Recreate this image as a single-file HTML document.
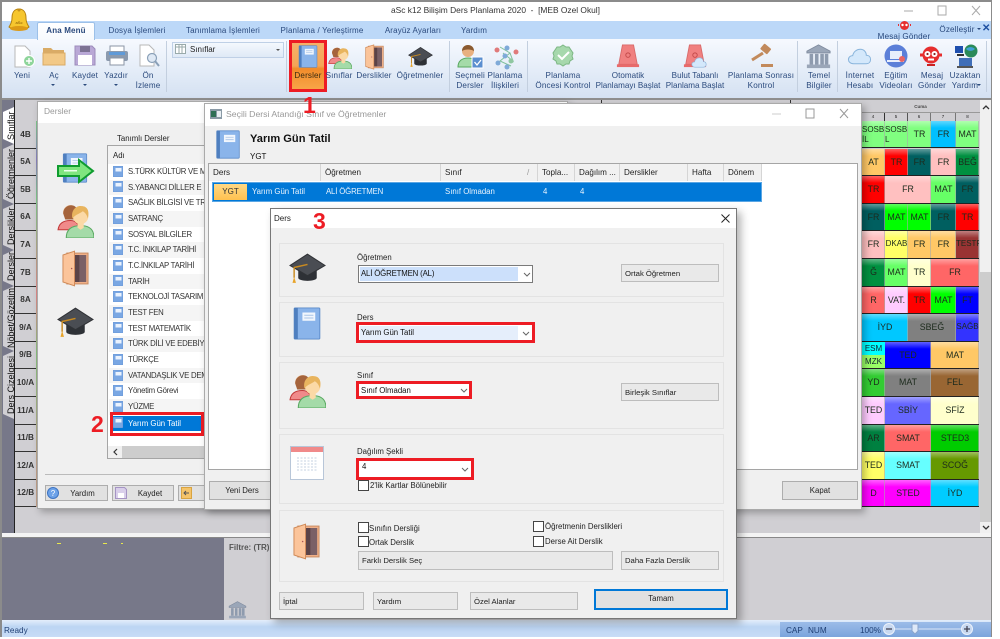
<!DOCTYPE html>
<html lang="tr"><head><meta charset="utf-8"><title>aSc k12</title>
<style>
html,body{margin:0;padding:0;background:#fff;width:1000px;height:639px;overflow:hidden}
#r{position:absolute;left:0;top:0;width:1000px;height:639px;overflow:hidden;font-family:"Liberation Sans",sans-serif;font-size:7.8px;color:#222;filter:blur(.35px)}
#r div,#r span,#r svg{position:absolute}
#r svg{overflow:visible}
.t{white-space:nowrap;line-height:11px;font-size:7.8px}
.rb{color:#2b4a7d;text-align:center;white-space:nowrap;line-height:10px;font-size:8.1px;letter-spacing:.15px}
.tab{color:#2b4a7d;top:25px;line-height:11px;white-space:nowrap;font-size:8px;letter-spacing:.15px;transform:translateX(-50%)}
.sep{top:41px;width:1px;height:51px;background:#c3cfdf}
.car{width:0;height:0;border-left:2px solid transparent;border-right:2px solid transparent;border-top:2px solid #2b4a7d}
.rl{left:15px;width:21px;text-align:center;background:#d0cfd3;border-bottom:1px solid #333;color:#333;font-size:8.2px;font-weight:bold;box-sizing:border-box;display:block}
.c{text-align:center;color:#1c2a1c;font-size:8.8px;line-height:26px;overflow:hidden;white-space:nowrap;height:26px;box-sizing:content-box;border-bottom:1px solid #222;background-image:linear-gradient(rgba(255,255,255,.38),rgba(255,255,255,0) 7px);box-shadow:inset -1px 0 0 rgba(170,170,170,.6)}
.vt{left:3px;width:11px;background:#d0cfd3;clip-path:polygon(0 5px,100% 0,100% 100%,0 calc(100% - 5px))}
.vtx{left:3px;width:11px;white-space:nowrap;font-size:9px;line-height:11px;color:#111}
.lr{left:109px;width:95px;height:16px;overflow:hidden;line-height:16px;white-space:nowrap;font-size:7.8px;letter-spacing:-.25px;color:#333}
.lr span{left:19px;top:0}
.btn{background:#e1e1e1;border:1px solid #adadad;box-sizing:border-box;text-align:center;color:#222;line-height:15px;font-size:7.8px}
.btl{background:#e9e9e9;border:1px solid #bdbdbd;box-sizing:border-box;padding-left:3px;color:#222;line-height:17px;font-size:7.7px;white-space:nowrap}
.gr{left:279px;width:445px;border:1px solid #e3e3e3;box-sizing:border-box}
.hc{top:164px;height:17px;line-height:17px;background:#f1f1f1;border-right:1px solid #d5d5d5;box-sizing:border-box;padding-left:4px;font-size:8.1px;color:#222;white-space:nowrap;overflow:hidden}
.red{border:3px solid #ed1c24;box-sizing:border-box}
.num{color:#ed1c24;font-weight:bold;font-size:23px;line-height:23px;font-family:"Liberation Sans",sans-serif}
.cb{width:9px;height:9px;border:1px solid #444;background:#fff;box-sizing:content-box}
.sh{box-shadow:3px 3px 7px rgba(0,0,0,.28)}
</style></head><body>
<div id="r">
<svg width="0" height="0" style="left:0;top:0"><defs>
<symbol id="book" viewBox="0 0 30 36"><rect x="1" y="1" width="28" height="34" rx="1" fill="#8ab4ea" stroke="#5c8bc9"/><rect x="1" y="1" width="4" height="34" fill="#4f7fbf"/><rect x="10" y="6" width="14" height="9" fill="#f1f6fd"/><path d="M12 9h10M12 12h10" stroke="#a9c4e6"/></symbol>
<symbol id="ppl" viewBox="0 0 36 36"><circle cx="13" cy="11" r="7" fill="#f4c8a0"/><path d="M6 12c0-9 13-11 14-2l-3 8H8z" fill="#a5643c"/><path d="M1 28c1-7 6-9 12-9 5 0 8 3 9 9z" fill="#f08a8a" stroke="#c23a3a"/><circle cx="23" cy="15" r="7.5" fill="#fbd9a6"/><path d="M15 17c-2-10 6-13 9-12 5 0 8 4 6 12-1-4-3-6-5-7-2 2-7 3-10 7z" fill="#e8b45e"/><path d="M9 36c0-9 6-12 14-12s13 3 13 12z" fill="#a4dba8" stroke="#58a860"/><path d="M20 21h6v5l-3 2-3-2z" fill="#fbd9a6"/></symbol>
<symbol id="door" viewBox="0 0 28 38"><rect x="5" y="3" width="22" height="32" fill="#f0b088" stroke="#c88a60"/><rect x="12" y="5" width="13" height="28" fill="#5b4347"/><rect x="18" y="5" width="7" height="28" fill="#7a6066"/><path d="M1 5 13 1v36L1 33z" fill="#fbc49a" stroke="#d08a58"/><circle cx="10" cy="19" r=".8" fill="#a55"/></symbol>
<symbol id="cap" viewBox="0 0 36 36"><path d="M9 18v10c0 4 18 4 18 0V18z" fill="#2e3136"/><path d="M18 5 35 16 18 26 1 16z" fill="#4a4d53" stroke="#303236"/><path d="M18 15 5 18v10" fill="none" stroke="#c98a20" stroke-width="1.4"/><path d="M5 27l-1.6 6h3.4z" fill="#e8a42a"/></symbol>
<symbol id="bank" viewBox="0 0 28 28"><path d="M14 1 27 8v2H1V8z" fill="#9aa6b8" stroke="#7f8b9e"/><path d="M4 11h4v12H4zm6 0h4v12h-4zm6 0h4v12h-4zm5 0h4v12h-4z" fill="#8e9bae"/><rect x="1" y="23" width="26" height="4" fill="#9aa6b8"/></symbol>
<symbol id="siren" viewBox="0 0 26 26"><path d="M7 1h12l4 21H3z" fill="#f08080" stroke="#d86a6a"/><rect x="1" y="22" width="24" height="3" fill="#e86a6a"/><circle cx="13" cy="12" r="2.4" fill="none" stroke="#c34a4a"/></symbol>
<symbol id="cloud" viewBox="0 0 28 20"><path d="M7 18.500C3 18.500 1 16 1 13.500s2-4.500 5-4.500C7 4 11 1.500 15 1.500c4 0 7 3 7 7 3 0 5 2 5 5s-2 5-5 5z" fill="#d4e8fb" stroke="#8ab5dc" stroke-width="1.200"/></symbol>
<symbol id="mini" viewBox="0 0 10 11"><rect width="10" height="11" rx="1" fill="#7aa7e3" stroke="#5a8bcf" stroke-width=".5"/><rect x="2.500" y="2" width="6" height="3.500" fill="#eaf2fd"/></symbol>
</defs></svg>

<!-- frame -->
<div style="left:0;top:0;width:992px;height:637px;background:#8b8b8b"></div>
<div style="left:2px;top:2px;width:989px;height:19px;background:#fff"></div>
<div class="t" style="left:391px;top:5px;font-size:8.4px;color:#333">aSc k12 Bilişim Ders Planlama 2020 &nbsp;- &nbsp;[MEB Ozel Okul]</div>
<svg style="left:904px;top:5px" width="80" height="12"><path d="M0 6h9" stroke="#aaa"/><rect x="34" y="1" width="8" height="9" fill="none" stroke="#aaa"/><path d="M68 1l8 9m0-9-8 9" stroke="#aaa" fill="none"/></svg>

<!-- menu tabs -->
<div style="left:2px;top:21px;width:989px;height:18px;background:#bcd8f8"></div>
<!-- ribbon -->
<div style="left:2px;top:39px;width:989px;height:59px;background:linear-gradient(#f6f9fe,#d4e1f2)"></div>
<div style="left:37px;top:22px;width:58px;height:18px;background:linear-gradient(#fff,#f6f9fd);border:1px solid #9cc0e8;border-bottom:0;box-sizing:border-box;border-radius:2px 2px 0 0"></div>
<div class="tab" style="left:66px;font-weight:bold">Ana Menü</div>
<div class="tab" style="left:137px">Dosya İşlemleri</div>
<div class="tab" style="left:223px">Tanımlama İşlemleri</div>
<div class="tab" style="left:322px">Planlama / Yerleştirme</div>
<div class="tab" style="left:413px">Arayüz Ayarları</div>
<div class="tab" style="left:474px">Yardım</div>
<svg style="left:898px;top:20px" width="13" height="11" viewBox="0 0 13 11"><circle cx="6.500" cy="5.500" r="4.500" fill="#e62e2e"/><circle cx="4.500" cy="5" r="1.200" fill="#fff"/><circle cx="8.500" cy="5" r="1.200" fill="#fff"/><path d="M1 5h-1M12 5h1" stroke="#e62e2e" stroke-width="2"/></svg>
<div class="rb" style="left:868px;top:32px;width:72px">Mesaj Gönder</div>
<div class="rb" style="left:935px;top:25px;width:44px">Özelleştir</div>
<div class="car" style="left:977px;top:28px"></div>
<div class="t" style="left:982px;top:23px;color:#1d4fa0;font-weight:bold;font-size:10px">✕</div>
<svg style="left:8px;top:8px" width="22" height="24" viewBox="0 0 22 24"><path d="M11 1c-5 0-7 4-7 9 0 5-2 7-3 9 3 3 17 3 20 0-1-2-3-4-3-9 0-5-2-9-7-9z" fill="#f6c62e" stroke="#b5810e"/><ellipse cx="11" cy="20.500" rx="9" ry="2.500" fill="#dc9a16"/><circle cx="11" cy="2" r="1.500" fill="#c4901c"/><text x="11" y="16" font-size="4" text-anchor="middle" font-family="Liberation Sans" fill="#7a4f00">aSc</text></svg>

<div class="sep" style="left:166px"></div><div class="sep" style="left:286px"></div><div class="sep" style="left:449px"></div><div class="sep" style="left:527px"></div><div class="sep" style="left:797px"></div><div class="sep" style="left:837px"></div><div class="sep" style="left:986px"></div>
<!-- Yeni -->
<svg style="left:14px;top:45px" width="22" height="24" viewBox="0 0 22 24"><path d="M1 1h10l5 5v16H1z" fill="#fff" stroke="#b8b8b8"/><circle cx="15" cy="16" r="5.500" fill="#8ed59a" stroke="#fff"/><path d="M15 13v6M12 16h6" stroke="#fff" stroke-width="1.400"/></svg>
<div class="rb" style="left:2px;top:71px;width:40px">Yeni</div>
<!-- Ac -->
<svg style="left:42px;top:45px" width="24" height="21" viewBox="0 0 24 21"><path d="M1 3h8l2 2h11v15H1z" fill="#d9ab66"/><path d="M1 8h22v12H1z" fill="#f2c987" stroke="#d9ab66"/></svg>
<div class="rb" style="left:34px;top:71px;width:40px">Aç</div><div class="car" style="left:51px;top:84px"></div>
<!-- Kaydet -->
<svg style="left:74px;top:45px" width="22" height="21" viewBox="0 0 22 21"><path d="M1 1h17l3 3v16H1z" fill="#b9a8d6" stroke="#9d8cbb"/><rect x="6" y="1" width="10" height="6" fill="#7c7294"/><rect x="4" y="10" width="14" height="10" fill="#fff"/></svg>
<div class="rb" style="left:65px;top:71px;width:40px">Kaydet</div><div class="car" style="left:83px;top:84px"></div>
<!-- Yazdir -->
<svg style="left:105px;top:45px" width="24" height="21" viewBox="0 0 24 21"><rect x="5" y="1" width="14" height="6" fill="#fff" stroke="#8b95a5"/><rect x="1" y="6" width="22" height="10" rx="2" fill="#8b9aae"/><rect x="4" y="7" width="16" height="3" fill="#5f9ad8"/><rect x="5" y="13" width="14" height="7" fill="#fff" stroke="#8b95a5"/></svg>
<div class="rb" style="left:96px;top:71px;width:40px">Yazdır</div><div class="car" style="left:114px;top:84px"></div>
<!-- On -->
<svg style="left:139px;top:44px" width="21" height="24" viewBox="0 0 21 24"><path d="M1 1h9l5 5v16H1z" fill="#fff" stroke="#b8b8b8"/><circle cx="13" cy="14" r="4.500" fill="#dfe9f5" stroke="#8aa0b8" stroke-width="1.200"/><path d="M16 17l4 5" stroke="#8aa0b8" stroke-width="2"/></svg>
<div class="rb" style="left:128px;top:71px;width:40px">Ön<br>İzleme</div>
<!-- combo -->
<div style="left:172px;top:42px;width:112px;height:16px;background:linear-gradient(#f4f8fd,#dfe9f6);border:1px solid #bfd0e6;box-sizing:border-box"></div>
<svg style="left:175px;top:44px" width="11" height="10"><rect x=".5" y=".5" width="10" height="9" fill="#fff" stroke="#9aa"/><path d="M.5 3h10M4 1v8M7 1v8" stroke="#9aa"/></svg>
<div class="t" style="left:190px;top:44px;color:#222;font-size:8px">Sınıflar</div>
<div class="car" style="left:276px;top:49px;border-top-color:#555"></div>
<!-- Dersler highlighted -->
<div style="left:289px;top:40px;width:38px;height:52px;background:linear-gradient(#f6b26a 0,#f5a556 50%,#f28c2a 55%,#f9a94c 100%)"></div>
<svg style="left:298px;top:45px" width="20" height="23"><use href="#book" width="20" height="23"/></svg>
<div class="rb" style="left:288px;top:71px;width:40px;color:#3b2b10">Dersler</div>
<div class="red" style="left:289px;top:40px;width:38px;height:52px"></div>
<svg style="left:328px;top:45px" width="24" height="24"><use href="#ppl" width="24" height="24"/></svg>
<div class="rb" style="left:319px;top:71px;width:40px">Sınıflar</div>
<svg style="left:365px;top:44px" width="19" height="26"><use href="#door" width="19" height="26"/></svg>
<div class="rb" style="left:354px;top:71px;width:40px">Derslikler</div>
<svg style="left:408px;top:44px" width="25" height="25"><use href="#cap" width="25" height="25"/></svg>
<div class="rb" style="left:395px;top:71px;width:50px">Öğretmenler</div>
<svg style="left:458px;top:43px" width="26" height="27" viewBox="0 0 26 27"><circle cx="10" cy="8" r="6" fill="#e8b080"/><path d="M4 8c0-8 12-8 12 0-3-2-9-2-12 0z" fill="#8a5a30"/><path d="M0 24c0-6 4-9 10-9s9 3 9 9z" fill="#a4dba8" stroke="#58a860"/><rect x="14" y="14" width="11" height="11" fill="#5b8fd0" stroke="#fff"/><path d="M16.500 19l2.500 3 4-5" stroke="#fff" fill="none" stroke-width="1.300"/></svg>
<div class="rb" style="left:450px;top:71px;width:40px">Seçmeli<br>Dersler</div>
<svg style="left:493px;top:44px" width="26" height="26" viewBox="0 0 26 26"><g stroke="#7fc09a" fill="none"><path d="M7 3l10 6-10 8 11 5M17 9l3 8-10-8"/></g><circle cx="4" cy="6" r="2.500" fill="#e07a7a"/><circle cx="14" cy="4" r="2.500" fill="#7faad8"/><circle cx="23" cy="8" r="2.500" fill="#e07a7a"/><circle cx="12" cy="12" r="2.500" fill="#7faad8"/><circle cx="5" cy="19" r="2.500" fill="#7faad8"/><circle cx="18" cy="17" r="2.500" fill="#8fc7a0"/><circle cx="14" cy="23" r="2.500" fill="#7faad8"/></svg>
<div class="rb" style="left:485px;top:71px;width:40px">Planlama<br>İlişkileri</div>
<svg style="left:552px;top:44px" width="22" height="23" viewBox="0 0 22 23"><path d="M11 1l3 2 3 0 2 3 2 3-1 3 1 3-3 2-1 3-3 0-3 2-3-2-3 0-1-3-3-2 1-3-1-3 2-3 2-3 3 0z" fill="#a6d8ac" stroke="#7cb784"/><path d="M6 11l4 4 7-7" stroke="#fff" stroke-width="2" fill="none"/></svg>
<div class="rb" style="left:533px;top:71px;width:60px">Planlama<br>Öncesi Kontrol</div>
<svg style="left:616px;top:44px" width="24" height="24"><use href="#siren" width="24" height="24"/></svg>
<div class="rb" style="left:593px;top:71px;width:70px;letter-spacing:0">Otomatik<br>Planlamayı Başlat</div>
<svg style="left:683px;top:44px" width="24" height="24"><use href="#siren" width="24" height="24"/></svg>
<svg style="left:691px;top:57px" width="16" height="11"><use href="#cloud" width="16" height="11"/></svg>
<div class="rb" style="left:660px;top:71px;width:70px;letter-spacing:0">Bulut Tabanlı<br>Planlama Başlat</div>
<svg style="left:750px;top:44px" width="24" height="24" viewBox="0 0 24 24"><rect x="11" y="1" width="9" height="7" rx="1" transform="rotate(40 15 5)" fill="#c28a5c"/><path d="M13 9 2 16" stroke="#c28a5c" stroke-width="3"/><rect x="11" y="20" width="12" height="3" fill="#c28a5c"/></svg>
<div class="rb" style="left:726px;top:71px;width:70px">Planlama Sonrası<br>Kontrol</div>
<svg style="left:806px;top:44px" width="25" height="25"><use href="#bank" width="25" height="25"/></svg>
<div class="rb" style="left:799px;top:71px;width:40px">Temel<br>Bilgiler</div>
<svg style="left:847px;top:48px" width="25" height="17"><use href="#cloud" width="25" height="17"/></svg>
<div class="rb" style="left:840px;top:71px;width:40px">İnternet<br>Hesabı</div>
<svg style="left:884px;top:44px" width="24" height="24" viewBox="0 0 24 24"><circle cx="12" cy="12" r="11.500" fill="#5b7fd8"/><rect x="6" y="7" width="12" height="8" fill="#e8eefb"/><rect x="3" y="16" width="17" height="2" fill="#e8eefb"/><circle cx="18" cy="15" r="3" fill="#e86464"/></svg>
<div class="rb" style="left:876px;top:71px;width:40px">Eğitim<br>Videoları</div>
<svg style="left:919px;top:45px" width="24" height="22" viewBox="0 0 24 22"><circle cx="12" cy="10" r="8.500" fill="#e62e2e"/><circle cx="8.500" cy="9" r="3" fill="#fff"/><circle cx="15.500" cy="9" r="3" fill="#fff"/><circle cx="8.500" cy="9" r="1.100" fill="#822"/><circle cx="15.500" cy="9" r="1.100" fill="#822"/><path d="M9 14.500h6" stroke="#fff" stroke-width="2"/><path d="M1 10h3M20 10h3" stroke="#e62e2e" stroke-width="3"/><path d="M8 20h8" stroke="#c22" stroke-width="2"/></svg>
<div class="rb" style="left:912px;top:71px;width:40px">Mesaj<br>Gönder</div>
<svg style="left:954px;top:44px" width="24" height="24" viewBox="0 0 24 24"><rect x="1" y="2" width="8" height="7" fill="#1e4fae"/><rect x="3" y="10" width="7" height="2" fill="#333"/><circle cx="17" cy="7" r="6.500" fill="#2a8a58"/><path d="M12 5c3-3 7-2 9 0-2 2-6 3-9 0z" fill="#3fa0d8"/><rect x="5" y="14" width="13" height="8" fill="#3f6eb8"/><path d="M3 23h16" stroke="#555" stroke-width="2"/></svg>
<div class="rb" style="left:945px;top:71px;width:40px">Uzaktan<br>Yardım</div><div class="car" style="left:977px;top:84px"></div>

<!-- workspace -->
<div style="left:2px;top:98px;width:989px;height:2px;background:#8f8f8f"></div>
<div style="left:2px;top:100px;width:989px;height:433px;background:#d0cfd3"></div>
<div style="left:2px;top:100px;width:12px;height:433px;background:#777889"></div>
<div style="left:14px;top:100px;width:1px;height:433px;background:#222"></div>
<div style="left:601px;top:100px;width:1px;height:4px;background:#333"></div>
<div style="left:790px;top:100px;width:1px;height:4px;background:#333"></div>

<!-- vertical tabs -->
<div class="vt" style="top:107px;height:37px;background:#fff"></div>
<div class="vt" style="top:144px;height:60px"></div>
<div class="vt" style="top:204px;height:46px"></div>
<div class="vt" style="top:250px;height:36px"></div>
<div class="vt" style="top:286px;height:65px"></div>
<div class="vt" style="top:351px;height:68px"></div>
<div class="vtx" style="top:140px;transform-origin:0 0;transform:rotate(-90deg) translateY(3px)">Sınıflar</div>
<div class="vtx" style="top:199px;transform-origin:0 0;transform:rotate(-90deg) translateY(3px)">Öğretmenler</div>
<div class="vtx" style="top:245px;transform-origin:0 0;transform:rotate(-90deg) translateY(3px)">Derslikler</div>
<div class="vtx" style="top:281px;transform-origin:0 0;transform:rotate(-90deg) translateY(3px)">Dersler</div>
<div class="vtx" style="top:348px;transform-origin:0 0;transform:rotate(-90deg) translateY(3px)">Nöbet/Gözetim</div>
<div class="vtx" style="top:414px;transform-origin:0 0;transform:rotate(-90deg) translateY(3px)">Ders Çizelgesi</div>

<!-- row labels -->
<div style="left:15px;top:100px;width:22px;height:21px;background:#d0cfd3;border-bottom:1px solid #333"></div>
<div class="rl" style="top:121px;height:28px;line-height:27px">4B</div>
<div class="rl" style="top:149px;height:27px;line-height:26px">5A</div>
<div class="rl" style="top:176px;height:28px;line-height:27px">5B</div>
<div class="rl" style="top:204px;height:27px;line-height:26px">6A</div>
<div class="rl" style="top:231px;height:28px;line-height:27px">7A</div>
<div class="rl" style="top:259px;height:28px;line-height:27px">7B</div>
<div class="rl" style="top:287px;height:27px;line-height:26px">8A</div>
<div class="rl" style="top:314px;height:28px;line-height:27px">9/A</div>
<div class="rl" style="top:342px;height:27px;line-height:26px">9/B</div>
<div class="rl" style="top:369px;height:28px;line-height:27px">10/A</div>
<div class="rl" style="top:397px;height:28px;line-height:27px">11/A</div>
<div class="rl" style="top:425px;height:27px;line-height:26px">11/B</div>
<div class="rl" style="top:452px;height:28px;line-height:27px">12/A</div>
<div class="rl" style="top:480px;height:27px;line-height:26px">12/B</div>
<div style="left:36px;top:121px;width:1px;height:386px;background:linear-gradient(#7fc98a,#8a7fc0 10%,#7fc98a 20%,#e08a8a 45%,#8ac07f 60%,#c0a08a 90%)"></div>

<!-- grid header -->
<div style="left:862px;top:100px;width:118px;height:21px;background:#cfced2"></div>
<div class="t" style="left:862px;top:102px;width:117px;text-align:center;font-size:4.500px;line-height:9px;font-weight:bold;color:#444">Cuma</div>
<div style="left:862px;top:112px;width:118px;height:1px;background:#999"></div>
<div class="t" style="left:862px;top:113px;width:23px;height:8px;text-align:center;font-size:4.500px;line-height:8px;border-right:1px solid #333;box-sizing:border-box">4</div>
<div class="t" style="left:885px;top:113px;width:23px;height:8px;text-align:center;font-size:4.500px;line-height:8px;border-right:1px solid #555;box-sizing:border-box">5</div>
<div class="t" style="left:908px;top:113px;width:23px;height:8px;text-align:center;font-size:4.500px;line-height:8px;border-right:1px solid #777;box-sizing:border-box">6</div>
<div class="t" style="left:931px;top:113px;width:25px;height:8px;text-align:center;font-size:4.500px;line-height:8px;border-right:1px solid #777;box-sizing:border-box">7</div>
<div class="t" style="left:956px;top:113px;width:23px;height:8px;text-align:center;font-size:4.500px;line-height:8px">8</div>

<!-- grid cells -->
<div class="c" style="left:862px;top:121px;width:23px;height:22px;padding-top:4px;background-color:#80ff80;line-height:10px;text-align:left;font-size:8px">SOSB<br>İL</div>
<div class="c" style="left:885px;top:121px;width:23px;height:22px;padding-top:4px;background-color:#80ff80;line-height:10px;text-align:left;font-size:8px">SOSBİ<br>L</div>
<div class="c" style="left:908px;top:121px;width:23px;background-color:#80ff80">TR</div>
<div class="c" style="left:931px;top:121px;width:25px;background-color:#00c0ff">FR</div>
<div class="c" style="left:956px;top:121px;width:23px;background-color:#80ff80">MAT</div>

<div class="c" style="left:862px;top:149px;width:23px;background-color:#ffc866">AT</div>
<div class="c" style="left:885px;top:149px;width:23px;background-color:#ff0000">TR</div>
<div class="c" style="left:908px;top:149px;width:23px;background-color:#005f60">FR</div>
<div class="c" style="left:931px;top:149px;width:25px;background-color:#ffc0c0">FR</div>
<div class="c" style="left:956px;top:149px;width:23px;background-color:#009040">BEĞ</div>

<div class="c" style="left:862px;top:176px;width:23px;height:27px;background-color:#ff0000">TR</div>
<div class="c" style="left:885px;top:176px;width:46px;height:27px;background-color:#ffc0c0">FR</div>
<div class="c" style="left:931px;top:176px;width:25px;height:27px;background-color:#66ff66">MAT</div>
<div class="c" style="left:956px;top:176px;width:23px;height:27px;background-color:#005f60">FR</div>

<div class="c" style="left:862px;top:204px;width:23px;background-color:#005f60">FR</div>
<div class="c" style="left:885px;top:204px;width:23px;background-color:#00ff00">MAT</div>
<div class="c" style="left:908px;top:204px;width:23px;background-color:#00ff00">MAT</div>
<div class="c" style="left:931px;top:204px;width:25px;background-color:#005f60">FR</div>
<div class="c" style="left:956px;top:204px;width:23px;background-color:#ff0000">TR</div>

<div class="c" style="left:862px;top:231px;width:23px;height:27px;background-color:#ffc0c0">FR</div>
<div class="c" style="left:885px;top:231px;width:23px;height:27px;background-color:#ffff66;font-size:8px">DKAB</div>
<div class="c" style="left:908px;top:231px;width:23px;height:27px;background-color:#ffc866">FR</div>
<div class="c" style="left:931px;top:231px;width:25px;height:27px;background-color:#ffc866">FR</div>
<div class="c" style="left:956px;top:231px;width:23px;height:27px;background-color:#993333;font-size:8px">TESTF</div>

<div class="c" style="left:862px;top:259px;width:23px;height:27px;background-color:#009040">Ğ</div>
<div class="c" style="left:885px;top:259px;width:23px;height:27px;background-color:#66ff66">MAT</div>
<div class="c" style="left:908px;top:259px;width:23px;height:27px;background-color:#ffffcc">TR</div>
<div class="c" style="left:931px;top:259px;width:48px;height:27px;background-color:#ff6666">FR</div>

<div class="c" style="left:862px;top:287px;width:23px;background-color:#ff6666">R</div>
<div class="c" style="left:885px;top:287px;width:23px;background-color:#ffccff">VAT.</div>
<div class="c" style="left:908px;top:287px;width:23px;background-color:#ff0000">TR</div>
<div class="c" style="left:931px;top:287px;width:25px;background-color:#00ff00">MAT</div>
<div class="c" style="left:956px;top:287px;width:23px;background-color:#0000ff">FT</div>

<div class="c" style="left:862px;top:314px;width:46px;height:27px;background-color:#00c8ff">İYD</div>
<div class="c" style="left:908px;top:314px;width:48px;height:27px;background-color:#808080">SBEĞ</div>
<div class="c" style="left:956px;top:314px;width:23px;height:27px;background-color:#3333ff;font-size:8px">SAĞB</div>

<div style="left:862px;top:342px;width:23px;height:13px;background:#00ffff;overflow:hidden;font-size:8px;line-height:13px;text-align:center;color:#123">ESM</div>
<div style="left:862px;top:355px;width:23px;height:13px;background:#99ff66;overflow:hidden;font-size:8px;line-height:13px;text-align:center;color:#123;border-bottom:1px solid #222">MZK</div>
<div class="c" style="left:885px;top:342px;width:46px;background-color:#0000ff">TED</div>
<div class="c" style="left:931px;top:342px;width:48px;background-color:#ffc866">MAT</div>

<div class="c" style="left:862px;top:369px;width:23px;height:27px;background-color:#33cc33">YD</div>
<div class="c" style="left:885px;top:369px;width:46px;height:27px;background-color:#808080">MAT</div>
<div class="c" style="left:931px;top:369px;width:48px;height:27px;background-color:#996633">FEL</div>

<div class="c" style="left:862px;top:397px;width:23px;height:27px;background-color:#ffccff">TED</div>
<div class="c" style="left:885px;top:397px;width:46px;height:27px;background-color:#6666ff">SBİY</div>
<div class="c" style="left:931px;top:397px;width:48px;height:27px;background-color:#ffffcc">SFİZ</div>

<div class="c" style="left:862px;top:425px;width:23px;background-color:#008040">AR</div>
<div class="c" style="left:885px;top:425px;width:46px;background-color:#ff6666">SMAT</div>
<div class="c" style="left:931px;top:425px;width:48px;background-color:#00cc00">STED3</div>

<div class="c" style="left:862px;top:452px;width:23px;height:27px;background-color:#ffff66">TED</div>
<div class="c" style="left:885px;top:452px;width:46px;height:27px;background-color:#66ffff">SMAT</div>
<div class="c" style="left:931px;top:452px;width:48px;height:27px;background-color:#669900">SCOĞ</div>

<div class="c" style="left:862px;top:480px;width:23px;background-color:#ff00ff">D</div>
<div class="c" style="left:885px;top:480px;width:46px;background-color:#ff00ff">STED</div>
<div class="c" style="left:931px;top:480px;width:48px;background-color:#00ccff">İYD</div>

<!-- right scrollbar -->
<div style="left:980px;top:100px;width:11px;height:433px;background:#f0f0f0"></div>
<div style="left:980px;top:272px;width:11px;height:250px;background:#cdcdcd"></div>
<svg style="left:982px;top:105px" width="8" height="5"><path d="M1 4l3-3 3 3" fill="none" stroke="#333" stroke-width="1.300"/></svg>
<svg style="left:982px;top:525px" width="8" height="5"><path d="M1 1l3 3 3-3" fill="none" stroke="#333" stroke-width="1.300"/></svg>

<!-- bottom panels -->
<div style="left:2px;top:533px;width:989px;height:4px;background:#f4f4f4"></div>
<div style="left:2px;top:537px;width:989px;height:1px;background:#888"></div>
<div style="left:2px;top:538px;width:222px;height:82px;background:#777889"></div>
<div style="left:224px;top:538px;width:767px;height:82px;background:#d0cfd3"></div>
<div style="left:57px;top:543px;width:4px;height:1px;background:#e8e84a"></div>
<div style="left:103px;top:543px;width:4px;height:1px;background:#e8e84a"></div>
<div style="left:121px;top:543px;width:2px;height:1px;background:#e8e84a"></div>
<div class="t" style="left:229px;top:542px;font-weight:bold;color:#555;font-size:8px">Filtre: (TR)</div>
<svg style="left:228px;top:601px" width="19" height="18"><use href="#bank" width="19" height="18"/></svg>

<!-- status bar -->
<div style="left:2px;top:620px;width:989px;height:17px;background:linear-gradient(#e4eefb,#bcd5f3 40%,#c8dcf6)"></div>
<div style="left:780px;top:622px;width:211px;height:15px;background:linear-gradient(#9cbce8,#7ba4dc)"></div>
<div class="t" style="left:4px;top:625px;color:#1f3f74;font-size:8.2px">Ready</div>
<div class="t" style="left:786px;top:625px;color:#1f3f74;font-size:8.2px">CAP</div>
<div class="t" style="left:808px;top:625px;color:#1f3f74;font-size:8.2px">NUM</div>
<div class="t" style="left:860px;top:625px;color:#1f3f74;font-size:8.2px">100%</div>
<svg style="left:882px;top:622px" width="100" height="14"><path d="M10 7h70" stroke="#dce7f7"/><circle cx="7" cy="7" r="5.500" fill="#c7d8f0" stroke="#ecf2fb"/><path d="M4 7h6" stroke="#445" stroke-width="1.300"/><circle cx="85" cy="7" r="5.500" fill="#c7d8f0" stroke="#ecf2fb"/><path d="M82 7h6M85 4v6" stroke="#445" stroke-width="1.300"/><path d="M30 2h6v7l-3 3-3-3z" fill="#dfe9f8" stroke="#8aa4cc"/></svg>

<!-- Dersler window -->
<div class="sh" style="left:37px;top:101px;width:531px;height:408px;background:#f0f0f0;border:1px solid #aaa;box-sizing:border-box"></div>
<div style="left:38px;top:102px;width:529px;height:21px;background:#fff"></div>
<div class="t" style="left:44px;top:106px;color:#999;font-size:8.4px">Dersler</div>
<div class="t" style="left:117px;top:133px;color:#222">Tanımlı Dersler</div>
<!-- left icons -->
<svg style="left:60px;top:153px" width="30" height="30"><use href="#book" width="30" height="30"/></svg>
<svg style="left:57px;top:159px" width="37" height="24" viewBox="0 0 37 24"><path d="M1 7h21V1l14 11-14 11v-6H1z" fill="#7fe57f" stroke="#0f9c2f" stroke-width="2"/><rect x="7" y="11" width="13" height="1.500" fill="#eaffea"/></svg>
<svg style="left:57px;top:201px" width="37" height="37"><use href="#ppl" width="37" height="37"/></svg>
<svg style="left:62px;top:250px" width="27" height="37"><use href="#door" width="27" height="37"/></svg>
<svg style="left:57px;top:303px" width="37" height="37"><use href="#cap" width="37" height="37"/></svg>
<!-- list -->
<div style="left:107px;top:145px;width:100px;height:314px;background:#fff;border:1px solid #a5a5a5;box-sizing:border-box"></div>
<div style="left:108px;top:146px;width:98px;height:18px;background:#f2f2f2"></div>
<div class="t" style="left:113px;top:150px">Adı</div>
<div class="lr" style="top:164px;background:#fff"><span>S.TÜRK KÜLTÜR VE M</span></div>
<div class="lr" style="top:180px;background:#f5f5f5"><span>S.YABANCI DİLLER E</span></div>
<div class="lr" style="top:195px;background:#fff"><span>SAĞLIK BİLGİSİ VE TR</span></div>
<div class="lr" style="top:211px;background:#f5f5f5"><span>SATRANÇ</span></div>
<div class="lr" style="top:227px;background:#fff"><span>SOSYAL BİLGİLER</span></div>
<div class="lr" style="top:242px;background:#f5f5f5"><span>T.C. İNKILAP TARİHİ</span></div>
<div class="lr" style="top:258px;background:#fff"><span>T.C.İNKILAP TARİHİ</span></div>
<div class="lr" style="top:274px;background:#f5f5f5"><span>TARİH</span></div>
<div class="lr" style="top:289px;background:#fff"><span>TEKNOLOJİ TASARIM</span></div>
<div class="lr" style="top:305px;background:#f5f5f5"><span>TEST FEN</span></div>
<div class="lr" style="top:321px;background:#fff"><span>TEST MATEMATİK</span></div>
<div class="lr" style="top:336px;background:#f5f5f5"><span>TÜRK DİLİ VE EDEBİY</span></div>
<div class="lr" style="top:352px;background:#fff"><span>TÜRKÇE</span></div>
<div class="lr" style="top:368px;background:#f5f5f5"><span>VATANDAŞLIK VE DEM</span></div>
<div class="lr" style="top:383px;background:#fff"><span>Yönetim Görevi</span></div>
<div class="lr" style="top:399px;background:#f5f5f5"><span>YÜZME</span></div>
<svg style="left:113px;top:166px" width="10" height="11"><use href="#mini" width="10" height="11"/></svg>
<svg style="left:113px;top:181px" width="10" height="11"><use href="#mini" width="10" height="11"/></svg>
<svg style="left:113px;top:197px" width="10" height="11"><use href="#mini" width="10" height="11"/></svg>
<svg style="left:113px;top:213px" width="10" height="11"><use href="#mini" width="10" height="11"/></svg>
<svg style="left:113px;top:229px" width="10" height="11"><use href="#mini" width="10" height="11"/></svg>
<svg style="left:113px;top:244px" width="10" height="11"><use href="#mini" width="10" height="11"/></svg>
<svg style="left:113px;top:260px" width="10" height="11"><use href="#mini" width="10" height="11"/></svg>
<svg style="left:113px;top:275px" width="10" height="11"><use href="#mini" width="10" height="11"/></svg>
<svg style="left:113px;top:291px" width="10" height="11"><use href="#mini" width="10" height="11"/></svg>
<svg style="left:113px;top:307px" width="10" height="11"><use href="#mini" width="10" height="11"/></svg>
<svg style="left:113px;top:322px" width="10" height="11"><use href="#mini" width="10" height="11"/></svg>
<svg style="left:113px;top:338px" width="10" height="11"><use href="#mini" width="10" height="11"/></svg>
<svg style="left:113px;top:354px" width="10" height="11"><use href="#mini" width="10" height="11"/></svg>
<svg style="left:113px;top:370px" width="10" height="11"><use href="#mini" width="10" height="11"/></svg>
<svg style="left:113px;top:385px" width="10" height="11"><use href="#mini" width="10" height="11"/></svg>
<svg style="left:113px;top:401px" width="10" height="11"><use href="#mini" width="10" height="11"/></svg>
<div style="left:113px;top:416px;width:88px;height:15px;background:#0078d7"></div>
<svg style="left:113px;top:417px" width="10" height="11"><use href="#mini" width="10" height="11"/></svg>
<div class="t" style="left:128px;top:418px;color:#fff">Yarım Gün Tatil</div>
<div class="red" style="left:110px;top:412px;width:94px;height:24px;border-width:3.500px"></div>
<div style="left:108px;top:446px;width:98px;height:12px;background:#f0f0f0"></div>
<div style="left:122px;top:446px;width:84px;height:12px;background:#cdcdcd"></div>
<svg style="left:112px;top:448px" width="8" height="8"><path d="M5 1 2 4l3 3" fill="none" stroke="#333" stroke-width="1.200"/></svg>
<div style="left:45px;top:474px;width:160px;height:1px;background:#bbb"></div>
<div class="btn" style="left:45px;top:485px;width:63px;height:16px;padding-left:12px">Yardım</div>
<svg style="left:47px;top:487px" width="12" height="12"><circle cx="6" cy="6" r="5.500" fill="#6da2e8" stroke="#3e74c2"/><text x="6" y="9" text-anchor="middle" font-family="Liberation Sans" font-size="8" fill="#fff">?</text></svg>
<div class="btn" style="left:112px;top:485px;width:62px;height:16px;padding-left:14px">Kaydet</div>
<svg style="left:115px;top:487px" width="12" height="12"><path d="M.5.500h9l2 2v9H.5z" fill="#d9cfea" stroke="#a594c4"/><rect x="3" y="6" width="6" height="5" fill="#fff"/></svg>
<div class="btn" style="left:178px;top:485px;width:30px;height:16px"></div>
<svg style="left:181px;top:487px" width="11" height="12"><rect x=".5" y=".5" width="10" height="11" fill="#f5c46a" stroke="#d9a441"/><path d="M8 6H3m2-2L3 6l2 2" stroke="#555" fill="none"/></svg>

<!-- Secili window -->
<div class="sh" style="left:204px;top:103px;width:658px;height:407px;background:#f0f0f0;border:1px solid #aaa;box-sizing:border-box"></div>
<div style="left:205px;top:104px;width:656px;height:22px;background:#fff"></div>
<svg style="left:210px;top:109px" width="12" height="10"><rect width="12" height="10" fill="#8a9aa6"/><rect x="1" y="2" width="5" height="6" fill="#2e6f55"/><rect x="7" y="2" width="4" height="6" fill="#e8eef2"/></svg>
<div class="t" style="left:226px;top:109px;color:#999;font-size:8.7px">Seçili Dersi Atandığı Sınıf ve Öğretmenler</div>
<svg style="left:772px;top:108px" width="80" height="12"><path d="M0 6h9" stroke="#ccc"/><rect x="34" y="1" width="8" height="9" fill="none" stroke="#999"/><path d="M68 1l8 9m0-9-8 9" stroke="#999" fill="none"/></svg>
<svg style="left:215px;top:130px" width="26" height="29"><use href="#book" width="26" height="29"/></svg>
<div class="t" style="left:250px;top:133px;font-weight:bold;font-size:11.1px;line-height:13px;color:#111">Yarım Gün Tatil</div>
<div class="t" style="left:250px;top:151px;font-size:8px;color:#111">YGT</div>
<div style="left:208px;top:163px;width:650px;height:307px;background:#fff;border:1px solid #a5a5a5;box-sizing:border-box"></div>
<div class="hc" style="left:209px;width:112px">Ders</div>
<div class="hc" style="left:321px;width:120px">Öğretmen</div>
<div class="hc" style="left:441px;width:97px">Sınıf<span style="left:86px;top:0;color:#999">/</span></div>
<div class="hc" style="left:538px;width:37px">Topla...</div>
<div class="hc" style="left:575px;width:45px">Dağılım ...</div>
<div class="hc" style="left:620px;width:68px">Derslikler</div>
<div class="hc" style="left:688px;width:36px">Hafta</div>
<div class="hc" style="left:724px;width:38px">Dönem</div>
<div style="left:212px;top:182px;width:550px;height:20px;background:#0078d7;border:1px solid #5aa6e4;box-sizing:border-box"></div>
<div style="left:214px;top:184px;width:33px;height:16px;background:linear-gradient(#ffd985,#ffc14f);text-align:center;line-height:16px;font-size:8px;color:#333">YGT</div>
<div class="t" style="left:252px;top:186px;color:#e8f3fd">Yarım Gün Tatil</div>
<div class="t" style="left:326px;top:186px;color:#e8f3fd;letter-spacing:-.15px">ALİ ÖĞRETMEN</div>
<div class="t" style="left:445px;top:186px;color:#e8f3fd">Sınıf Olmadan</div>
<div class="t" style="left:543px;top:186px;color:#e8f3fd">4</div>
<div class="t" style="left:580px;top:186px;color:#e8f3fd">4</div>
<div class="btn" style="left:209px;top:481px;width:66px;height:19px;line-height:18px">Yeni Ders</div>
<div class="btn" style="left:782px;top:481px;width:76px;height:19px;line-height:18px">Kapat</div>

<!-- Dialog -->
<div style="left:270px;top:208px;width:467px;height:411px;background:#f0f0f0;border:1px solid #777;box-sizing:border-box;box-shadow:4px 4px 8px rgba(0,0,0,.3)"></div>
<div style="left:271px;top:209px;width:465px;height:19px;background:#fff"></div>
<div class="t" style="left:274px;top:213px;font-size:8px">Ders</div>
<svg style="left:721px;top:214px" width="9" height="9"><path d="M.5.500l8 8m0-8-8 8" stroke="#222" fill="none"/></svg>

<div class="gr" style="top:243px;height:54px"></div>
<div class="gr" style="top:302px;height:55px"></div>
<div class="gr" style="top:362px;height:67px"></div>
<div class="gr" style="top:434px;height:70px"></div>
<div class="gr" style="top:510px;height:72px"></div>

<svg style="left:289px;top:249px" width="37" height="37"><use href="#cap" width="37" height="37"/></svg>
<div class="t" style="left:357px;top:252px">Öğretmen</div>
<div style="left:358px;top:265px;width:175px;height:18px;background:#fff;border:1px solid #7a7a7a;box-sizing:border-box"></div>
<div style="left:360px;top:267px;width:158px;height:14px;background:#cce0fb"></div>
<div class="t" style="left:361px;top:268px;color:#111;letter-spacing:-.15px">ALİ ÖĞRETMEN (AL)</div>
<svg style="left:523px;top:272px" width="8" height="5"><path d="M1 1l3 3 3-3" fill="none" stroke="#666"/></svg>
<div class="btl" style="left:621px;top:264px;width:98px;height:18px">Ortak Öğretmen</div>

<svg style="left:292px;top:307px" width="30" height="33"><use href="#book" width="30" height="33"/></svg>
<div class="t" style="left:357px;top:312px">Ders</div>
<div style="left:358px;top:324px;width:175px;height:18px;background:#fff"></div>
<div style="left:360px;top:326px;width:158px;height:14px;background:#e5eefb"></div>
<div class="t" style="left:361px;top:327px;color:#111">Yarım Gün Tatil</div>
<svg style="left:522px;top:331px" width="8" height="5"><path d="M1 1l3 3 3-3" fill="none" stroke="#666"/></svg>
<div class="red" style="left:356px;top:322px;width:179px;height:21px"></div>

<svg style="left:289px;top:371px" width="37" height="37"><use href="#ppl" width="37" height="37"/></svg>
<div class="t" style="left:357px;top:370px">Sınıf</div>
<div style="left:358px;top:383px;width:112px;height:14px;background:#fff"></div>
<div class="t" style="left:361px;top:385px;color:#111">Sınıf Olmadan</div>
<svg style="left:460px;top:388px" width="8" height="5"><path d="M1 1l3 3 3-3" fill="none" stroke="#666"/></svg>
<div class="red" style="left:356px;top:381px;width:116px;height:18px"></div>
<div class="btl" style="left:621px;top:383px;width:98px;height:18px">Birleşik Sınıflar</div>

<svg style="left:290px;top:446px" width="34" height="34" viewBox="0 0 34 34"><rect x=".5" y=".5" width="33" height="33" fill="#fff" stroke="#b8c6d8"/><rect x="1" y="1" width="32" height="5" fill="#f08a8a"/><path d="M7 12h20M7 15h20M7 18h20M7 21h20M7 24h20" stroke="#c5d2e2" stroke-dasharray="2 1.500"/></svg>
<div class="t" style="left:357px;top:446px">Dağılım Şekli</div>
<div style="left:358px;top:460px;width:114px;height:18px;background:#fff"></div>
<div class="t" style="left:362px;top:461px;color:#111">4</div>
<svg style="left:461px;top:467px" width="8" height="5"><path d="M1 1l3 3 3-3" fill="none" stroke="#666"/></svg>
<div class="red" style="left:356px;top:458px;width:118px;height:22px"></div>
<div class="cb" style="left:358px;top:480px"></div>
<div class="t" style="left:370px;top:480px">2'lik Kartlar Bölünebilir</div>

<svg style="left:293px;top:523px" width="27" height="37"><use href="#door" width="27" height="37"/></svg>
<div class="cb" style="left:358px;top:522px"></div>
<div class="t" style="left:369px;top:523px">Sınıfın Dersliği</div>
<div class="cb" style="left:358px;top:536px"></div>
<div class="t" style="left:369px;top:537px">Ortak Derslik</div>
<div class="cb" style="left:533px;top:521px"></div>
<div class="t" style="left:545px;top:521px">Öğretmenin Derslikleri</div>
<div class="cb" style="left:533px;top:536px"></div>
<div class="t" style="left:545px;top:536px">Derse Ait Derslik</div>
<div class="btl" style="left:358px;top:551px;width:255px;height:19px;line-height:18px">Farklı Derslik Seç</div>
<div class="btl" style="left:621px;top:551px;width:98px;height:19px;line-height:18px">Daha Fazla Derslik</div>

<div class="btl" style="left:279px;top:592px;width:85px;height:18px">İptal</div>
<div class="btl" style="left:373px;top:592px;width:85px;height:18px">Yardım</div>
<div class="btl" style="left:470px;top:592px;width:108px;height:18px">Özel Alanlar</div>
<div style="left:594px;top:589px;width:134px;height:21px;background:#e1e1e1;border:2px solid #0078d7;box-sizing:border-box;text-align:center;line-height:16px;font-size:7.8px">Tamam</div>

<!-- annotations -->
<div class="num" style="left:303px;top:94px">1</div>
<div class="num" style="left:91px;top:413px">2</div>
<div class="num" style="left:313px;top:210px">3</div>
</div>
</body></html>
